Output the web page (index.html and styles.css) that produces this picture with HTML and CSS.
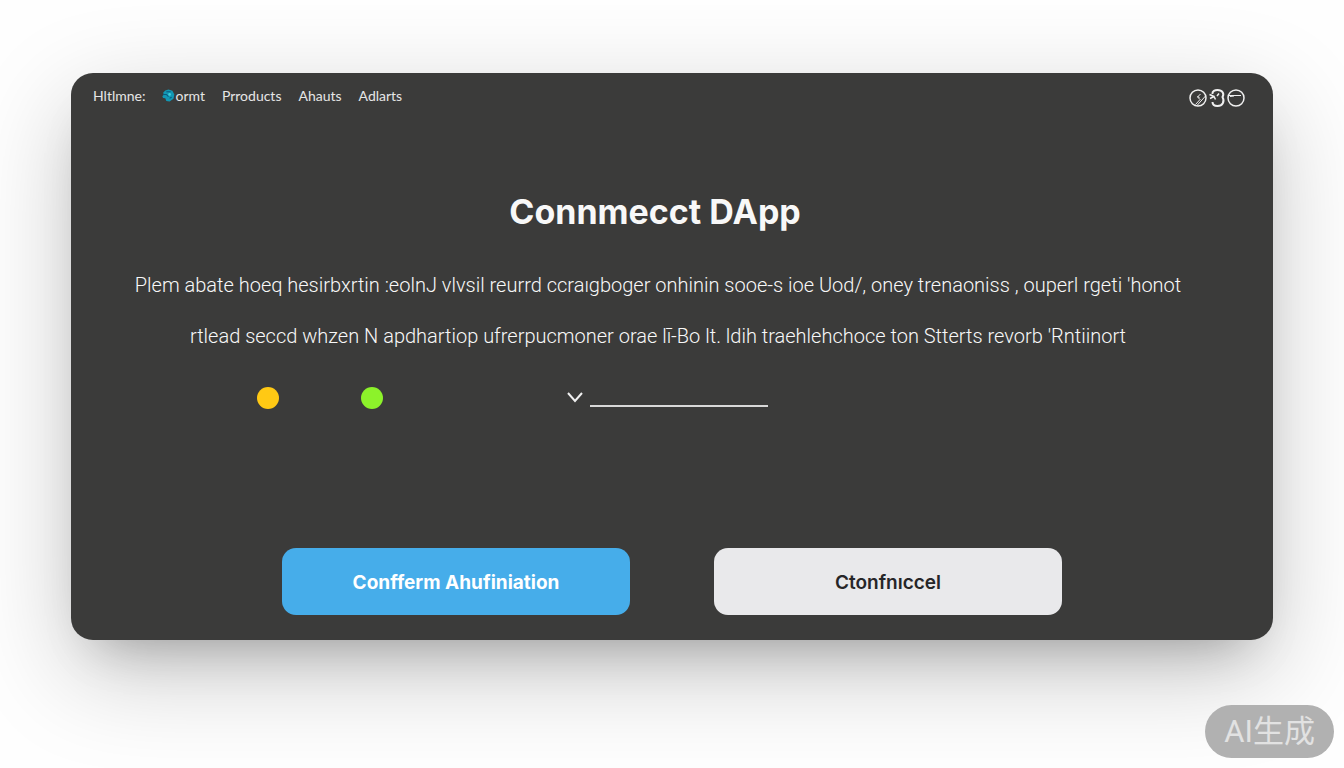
FILE: index.html
```html
<!DOCTYPE html>
<html lang="en">

<head>
    <meta charset="UTF-8">
    <meta name="viewport" content="width=device-width, initial-scale=1.0">
    <title>Connmecct DApp</title>
    <link rel="stylesheet" href="styles.css">
</head>

<body>

    <main class="card">
        <header class="topbar">
            <nav class="nav">
                <a href="#">Hltlmne:</a>
                <a href="#" class="nav-active">
                    <svg class="logo" viewBox="0 0 12 12" aria-hidden="true">
                        <path d="M6 .4 9.6 1.6 11.4 5 10.6 9 7 11.6 4 11 3 8.6 1 8.4.3 6.6 1.8 5 1 3.4 3 1.4z" fill="#1298b4" />
                        <path d="M1 5h3l2 2M4 2.5h4M7 8.5l2-1" fill="none" stroke="#0b5a80" />
                        <circle cx="7" cy="5" r="1.2" fill="#3fd0dc" />
                    </svg>ormt
                </a>
                <a href="#">Prroducts</a>
                <a href="#">Ahauts</a>
                <a href="#">Adlarts</a>
            </nav>
            <div class="tools">
                <button type="button" aria-label="Recent">
                    <svg viewBox="0 0 18 18">
                        <circle cx="9" cy="9" r="8" />
                        <path d="M8.500 8 11.500 5M9 7v2h2M16.500 7 8 16.500M11.500 10 6.500 15.500" stroke-width="1" />
                    </svg>
                </button>
                <button type="button" aria-label="Account">
                    <svg viewBox="0 0 18 18">
                        <path d="M4.500 5C4 2 7 1 9.500 1c5 0 7 3.500 5 7 2.500 4.500 0 9-5 9-3 0-5-1.500-5-4" stroke-width="2" />
                        <path d="M1.500 5.500 6 7.500M2 9.500l4-2 1.500 3M9 7l2-2.500" />
                    </svg>
                </button>
                <button type="button" aria-label="Menu">
                    <svg viewBox="0 0 18 18">
                        <circle cx="9" cy="9" r="8" />
                        <path d="M2 6.500h12M3 7.500l4-.5" stroke-width="1" />
                    </svg>
                </button>
            </div>
        </header>

        <section class="message">
            <h1>Connmecct DApp</h1>
            <p>Plem abate hoeq hesirbxrtin :eolnJ vlvsil reurrd ccraıgboger onhinin sooe-s ioe Uod/, oney trenaoniss , ouperl rgeti 'honot</p>
            <p>rtlead seccd whzen N apdhartiop ufrerpucmoner orae lī-Bo lt. ldih traehlehchoce ton Stterts revorb 'Rntiinort</p>
        </section>

        <div class="status">
            <span class="dot dot-yellow"></span>
            <span class="dot dot-green"></span>
            <div class="field">
                <button type="button" class="toggle" aria-label="Show options">
                    <svg viewBox="0 0 16 12">
                        <path d="M1 1 8 9l7-8" />
                    </svg>
                </button>
                <input type="text" aria-label="Account address">
            </div>
        </div>

        <div class="actions">
            <button type="button" class="btn btn-confirm">Confferm Ahufiniation</button>
            <button type="button" class="btn btn-cancel">Ctonfnıccel</button>
        </div>
    </main>

    <div class="badge">AI生成</div>

</body>

</html>
```

FILE: styles.css
```css
* {
    box-sizing: border-box;
}

body {
    min-height: 100vh;
    margin: 0;
    padding: 73px 71px;
    background-color: #fefefe;
    font-family: Lato, "Liberation Sans", sans-serif;
}

button,
input {
    font-family: inherit;
    border: none;
    padding: 0;
    background: none;
}

button {
    cursor: pointer;
}

.card {
    background-color: #3b3b3a;
    color: #f8f8f8;
    border-radius: 22px;
    padding-bottom: 25px;
    box-shadow: 0 28px 48px -28px rgba(0, 0, 0, 0.28), 0 32px 100px rgba(0, 0, 0, 0.22);
}

/* Top bar */
.topbar {
    display: flex;
    justify-content: space-between;
    align-items: center;
    height: 48px;
    padding: 2px 28px 0 22px;
}

.nav {
    display: flex;
    gap: 17px;
    padding-bottom: 5px;
}

.nav a {
    color: #e6e6e6;
    font-size: 14px;
    text-decoration: none;
}

.nav-active {
    display: flex;
    align-items: center;
}

.logo {
    width: 13px;
    height: 13px;
}

.tools {
    display: flex;
    gap: 1px;
}

.tools button,
.tools svg {
    display: block;
    width: 18px;
    height: 18px;
}

.tools svg,
.toggle svg {
    fill: none;
    stroke: #f0f0f0;
    stroke-width: 1.5;
}

/* Message */
.message {
    padding: 69px 28px 0 0;
    text-align: center;
}

.message h1 {
    margin: 0 0 26px;
    padding-right: 6px;
    font-family: Inter, "Liberation Sans", sans-serif;
    font-size: 34px;
    line-height: 44px;
}

.message p {
    margin: 0;
    font-family: Roboto, "Liberation Sans", sans-serif;
    font-size: 20px;
    font-weight: 300;
    line-height: 51px;
}

.status {
    display: flex;
    align-items: center;
    gap: 82px;
    height: 24px;
    margin: 24px 0 138px;
    padding-left: 186px;
}

.dot {
    width: 22px;
    height: 22px;
    border-radius: 50%;
}

.dot-yellow {
    background-color: #ffc914;
}

.dot-green {
    background-color: #8cf22a;
}

.field {
    display: flex;
    align-items: center;
    gap: 7px;
    margin-left: 102px;
}

.toggle svg {
    display: block;
    width: 16px;
    height: 12px;
    stroke-width: 2;
}

.field input {
    width: 178px;
    height: 18px;
    color: #f4f4f4;
    border-bottom: 2px solid #d8d8d8;
    outline: none;
}

/* Buttons */
.actions {
    display: flex;
    gap: 84px;
    padding: 0 211px;
}

.btn {
    flex: 1;
    height: 67px;
    padding-top: 2px;
    border-radius: 14px;
    font-family: Inter, "Liberation Sans", sans-serif;
    font-size: 19px;
}

.btn-confirm {
    background-color: #46adea;
    color: #fff;
    font-weight: 700;
}

.btn-cancel {
    background-color: #e9e9eb;
    color: #262628;
    font-weight: 600;
}

.badge {
    position: fixed;
    right: 10px;
    bottom: 10px;
    padding: 0 19px;
    border-radius: 27px;
    background-color: #b1b1b1;
    color: #e2e2e2;
    font-family: Roboto, "Noto Sans CJK SC", sans-serif;
    font-size: 31px;
    line-height: 53px;
}
```
